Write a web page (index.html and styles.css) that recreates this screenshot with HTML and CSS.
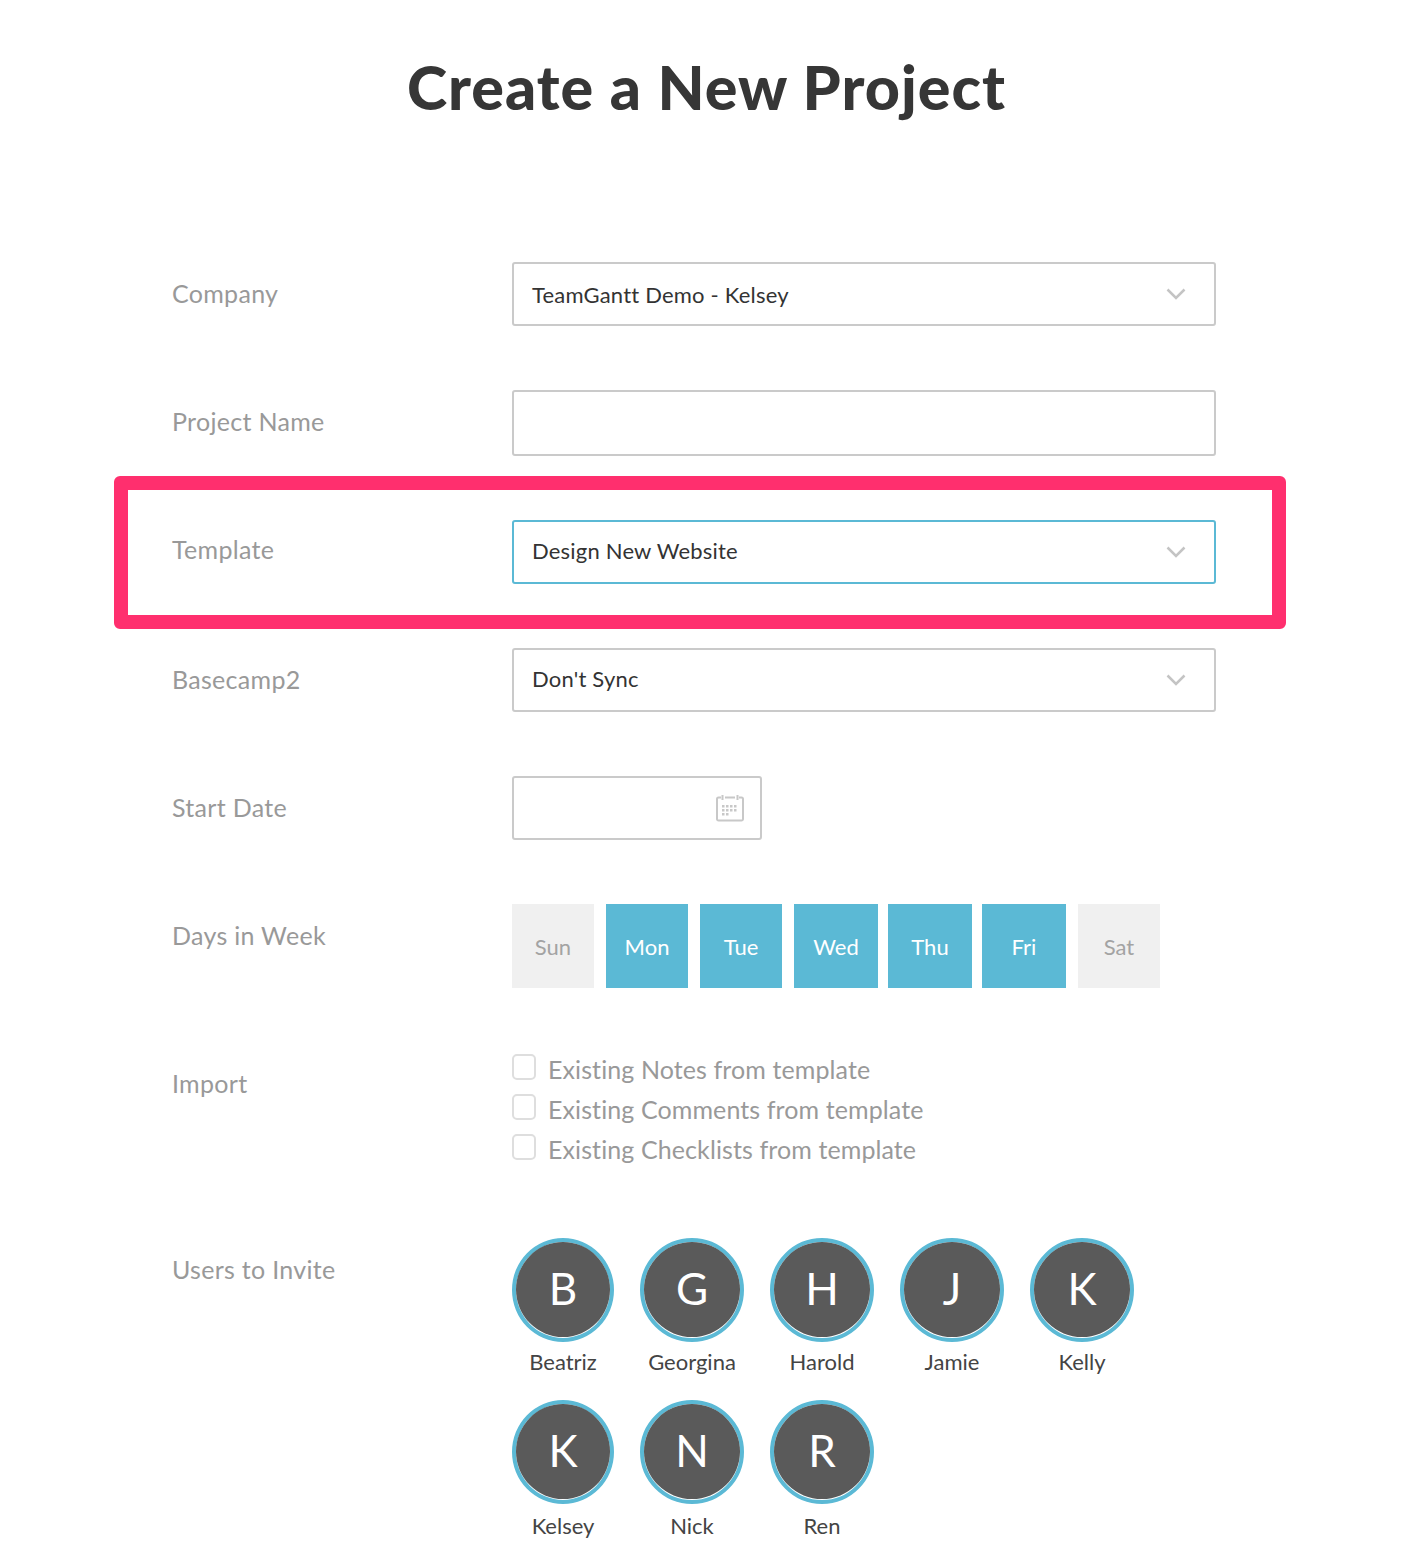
FILE: index.html
```html
<!DOCTYPE html>
<html lang="en">
<head>
    <meta charset="UTF-8">
    <title>Create a New Project</title>
    <link rel="stylesheet" href="styles.css">
</head>
<body>
    <div class="container">
        <h1>Create a New Project</h1>

        <form class="project-form">
            <div class="row">
                <label class="row-label">Company</label>
                <div class="select">
                    <span>TeamGantt Demo - Kelsey</span>
                    <svg class="chevron" viewBox="0 0 20 12"><path d="M1.5 1.5 10 10l8.500-8.500"/></svg>
                </div>
            </div>

            <div class="row">
                <label class="row-label">Project Name</label>
                <div class="text-input"></div>
            </div>

            <div class="row row-highlight">
                <label class="row-label">Template</label>
                <div class="select select-active">
                    <span>Design New Website</span>
                    <svg class="chevron" viewBox="0 0 20 12"><path d="M1.5 1.5 10 10l8.500-8.500"/></svg>
                </div>
            </div>

            <div class="row row-sync">
                <label class="row-label">Basecamp2</label>
                <div class="select">
                    <span>Don't Sync</span>
                    <svg class="chevron" viewBox="0 0 20 12"><path d="M1.5 1.5 10 10l8.500-8.500"/></svg>
                </div>
            </div>

            <div class="row">
                <label class="row-label">Start Date</label>
                <div class="date-input">
                    <svg class="calendar" viewBox="0 0 28 28">
                        <path class="cal-line" d="M5 3.500H2.500a1.500 1.500 0 0 0-1.500 1.500v20a1.500 1.500 0 0 0 1.500 1.500h23a1.500 1.500 0 0 0 1.500-1.500V5a1.500 1.500 0 0 0-1.500-1.500H23M9 3.500h10M6.500 1v5M21.500 1v5"/>
                        <g class="cal-dots">
                            <rect x="6" y="11" width="2.500" height="2.500"/><rect x="10" y="11" width="2.500" height="2.500"/><rect x="14" y="11" width="2.500" height="2.500"/><rect x="18" y="11" width="2.500" height="2.500"/>
                            <rect x="6" y="15" width="2.500" height="2.500"/><rect x="10" y="15" width="2.500" height="2.500"/><rect x="14" y="15" width="2.500" height="2.500"/><rect x="18" y="15" width="2.500" height="2.500"/>
                            <rect x="6" y="19" width="2.500" height="2.500"/><rect x="10" y="19" width="2.500" height="2.500"/>
                        </g>
                    </svg>
                </div>
            </div>

            <div class="row row-days">
                <label class="row-label">Days in Week</label>
                <div class="days">
                    <span class="day">Sun</span>
                    <span class="day on">Mon</span>
                    <span class="day on">Tue</span>
                    <span class="day on wide">Wed</span>
                    <span class="day on wide">Thu</span>
                    <span class="day on wide">Fri</span>
                    <span class="day">Sat</span>
                </div>
            </div>

            <div class="row row-import">
                <label class="row-label">Import</label>
                <div class="checks">
                    <div class="check"><span class="box"></span>Existing Notes from template</div>
                    <div class="check"><span class="box"></span>Existing Comments from template</div>
                    <div class="check"><span class="box"></span>Existing Checklists from template</div>
                </div>
            </div>

            <div class="row row-users">
                <label class="row-label">Users to Invite</label>
                <div class="users">
                    <div class="user"><div class="avatar"><span>B</span></div>Beatriz</div>
                    <div class="user"><div class="avatar"><span>G</span></div>Georgina</div>
                    <div class="user"><div class="avatar"><span>H</span></div>Harold</div>
                    <div class="user"><div class="avatar"><span>J</span></div>Jamie</div>
                    <div class="user"><div class="avatar"><span>K</span></div>Kelly</div>
                    <div class="user"><div class="avatar"><span>K</span></div>Kelsey</div>
                    <div class="user"><div class="avatar"><span>N</span></div>Nick</div>
                    <div class="user"><div class="avatar"><span>R</span></div>Ren</div>
                </div>
            </div>
        </form>
    </div>
</body>
</html>
```

FILE: styles.css
```css
:root {
    --teal: #5bb9d5;
    --border: #cacaca;
    --label: #999999;
    --text: #333333;
    --pink: #ff2f6e;
}

html, body {
    margin: 0;
    padding: 0;
    background: #ffffff;
}

body {
    font-family: Lato, "Open Sans", sans-serif;
    color: var(--text);
}

.container {
    width: 1416px;
    height: 1562px;
    box-sizing: border-box;
    overflow: hidden;
}

h1 {
    margin: 0;
    padding: 49px 3px 0 0;
    height: 262px;
    box-sizing: border-box;
    text-align: center;
    font-size: 61px;
    line-height: 76px;
    font-weight: 900;
    letter-spacing: 1px;
    color: #363636;
}

.project-form {
    padding: 0 200px 0 172px;
}

.row {
    display: flex;
    margin-bottom: 64px;
}

.row-label {
    flex: 0 0 340px;
    font-size: 25px;
    line-height: 62px;
    color: var(--label);
    letter-spacing: 0.3px;
}

.select, .text-input, .date-input {
    display: flex;
    align-items: center;
    justify-content: space-between;
    box-sizing: border-box;
    height: 64px;
    width: 704px;
    padding: 0 28px 0 18px;
    border: 2px solid var(--border);
    border-radius: 3px;
    font-size: 22px;
    letter-spacing: 0.2px;
    color: var(--text);
}

.text-input {
    height: 66px;
}

.date-input {
    width: 250px;
    padding-right: 16px;
    justify-content: flex-end;
}

.select-active {
    border-color: var(--teal);
}

.row-highlight .select span,
.row-sync .select span {
    margin-bottom: 4px;
}

.chevron {
    width: 20px;
    height: 12px;
    fill: none;
    stroke: #c4c4c4;
    stroke-width: 2.500;
}

.calendar {
    width: 28px;
    height: 28px;
}

.cal-line {
    fill: none;
    stroke: #c8c8c8;
    stroke-width: 2;
}

.cal-dots {
    fill: #c8c8c8;
}

/* highlight frame sits over the template row */
.row-highlight {
    position: relative;
}

.row-highlight .row-label {
    line-height: 58px;
}

.row-highlight::after {
    content: "";
    position: absolute;
    left: -58px;
    top: -44px;
    width: 1172px;
    height: 153px;
    box-sizing: border-box;
    border: 14px solid var(--pink);
    border-radius: 6px;
    pointer-events: none;
}

.row-days {
    margin-bottom: 61px;
}

.days {
    display: flex;
    gap: 12px;
}

.day {
    display: flex;
    align-items: center;
    justify-content: center;
    width: 82px;
    height: 84px;
    background: #f0f0f0;
    color: #a3a3a3;
    font-size: 22px;
}

.day.on {
    background: var(--teal);
    color: #ffffff;
}

.day.wide {
    width: 84px;
}

.day.wide + .day.wide {
    margin-left: -2px;
}

.row-import {
    margin-bottom: 69px;
}

.row-import .row-label {
    line-height: 68px;
}

.checks {
    display: flex;
    flex-direction: column;
}

.check {
    display: flex;
    align-items: center;
    height: 40px;
    font-size: 25px;
    color: var(--label);
    letter-spacing: 0.1px;
}

.box {
    width: 24px;
    height: 26px;
    box-sizing: border-box;
    margin: -5px 12px 0 0;
    border: 2px solid #dedede;
    border-radius: 5px;
}

.users {
    display: grid;
    grid-template-columns: 102px repeat(4, 104px);
    column-gap: 26px;
    grid-auto-rows: 162px;
}

.user {
    text-align: center;
    font-size: 22px;
    color: #444444;
    white-space: nowrap;
}

.avatar {
    box-sizing: border-box;
    height: 104px;
    margin-bottom: 6px;
    padding: 0 0 1px;
    border: 4px solid var(--teal);
    border-radius: 50%;
    background: #ffffff;
}

.user:nth-child(n+6) .avatar {
    margin-bottom: 8px;
}

.avatar span {
    display: flex;
    align-items: center;
    justify-content: center;
    box-sizing: border-box;
    height: 100%;
    padding-bottom: 3px;
    border-radius: 50%;
    background: #5a5a5a;
    color: #ffffff;
    font-size: 44px;
    font-weight: 400;
}
```
